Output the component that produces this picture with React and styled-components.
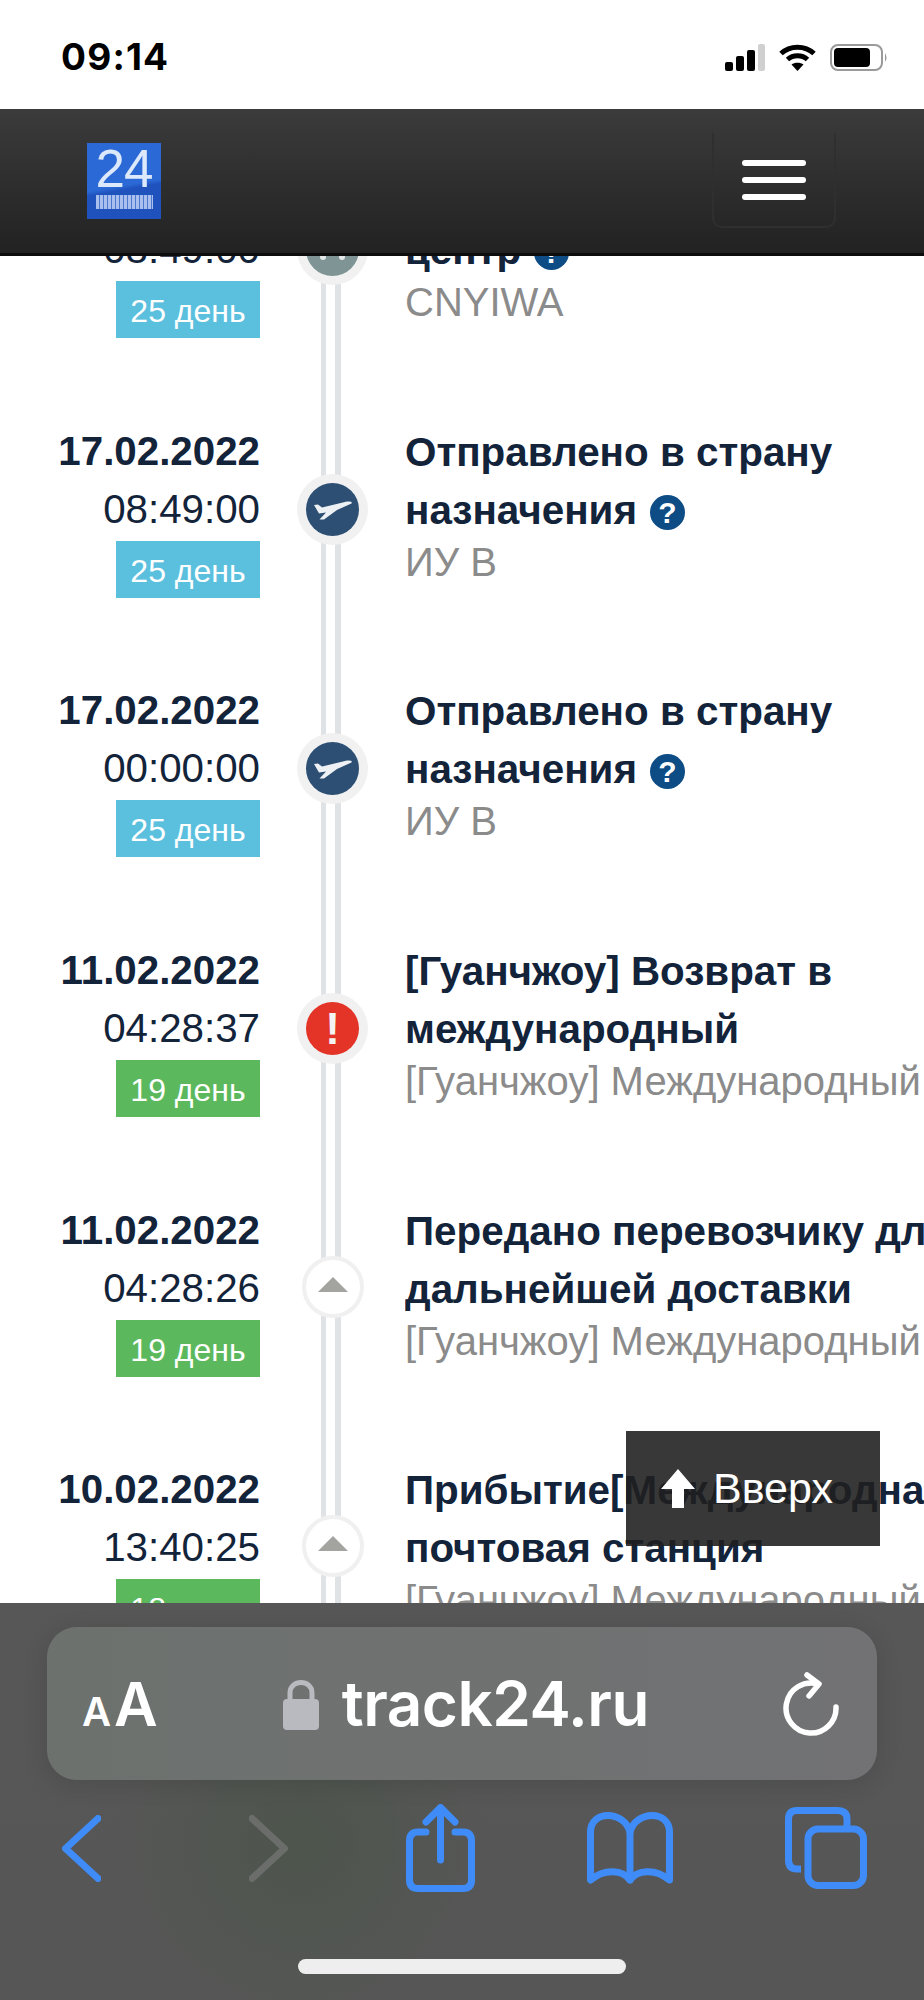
import React from 'react'
import styled, { createGlobalStyle } from 'styled-components'

const GlobalStyle = createGlobalStyle`
    html, body {
        margin: 0;
        padding: 0;
        background: #fff;
    }
`

const Phone = styled.div`
    position: relative;
    display: flex;
    flex-direction: column;
    width: 924px;
    height: 2000px;
    overflow: hidden;
    background: #fff;
    font-family: "Liberation Sans", Arial, sans-serif;
`

const StatusBar = styled.div`
    display: flex;
    flex: none;
    align-items: center;
    justify-content: space-between;
    height: 109px;
    padding: 0 36px 0 61px;
    box-sizing: border-box;
`

const Clock = styled.span`
    font-family: "Inter", sans-serif;
    font-weight: 700;
    font-size: 37px;
    letter-spacing: 1.2px;
    color: #000;
    margin-top: 4px;
`

const StatusIcons = styled.div`
    display: flex;
    align-items: center;
    gap: 14px;
    margin-top: 5px;
`

const NavBar = styled.div`
    position: relative;
    z-index: 2;
    display: flex;
    flex: none;
    align-items: center;
    justify-content: space-between;
    height: 147px;
    padding: 0 88px 0 87px;
    box-sizing: border-box;
    background: linear-gradient(#3b3b3b, #222);
    border-bottom: 3px solid #0c0c0c;
`

const Logo = styled.div`
    display: flex;
    flex-direction: column;
    align-items: center;
    width: 74px;
    height: 76px;
    background: linear-gradient(170deg, #2b69d6 0 55%, #1f52bd 60%);
`

const LogoDigits = styled.span`
    font-size: 53px;
    line-height: 52px;
    font-weight: 400;
    color: #dce8fb;
    letter-spacing: -1px;
`

const LogoBars = styled.div`
    width: 57px;
    height: 14px;
    background: repeating-linear-gradient(to right, #a9c0ee 0 3px, #4d76cf 3px 4px);
`

const MenuButton = styled.div`
    display: flex;
    flex-direction: column;
    align-items: center;
    justify-content: center;
    gap: 11px;
    width: 124px;
    height: 96px;
    box-sizing: border-box;
    border: 2px solid #2f2f2f;
    border-top-color: transparent;
    border-radius: 0 0 10px 10px;
    margin-top: -3px;
`

const MenuLine = styled.span`
    display: block;
    width: 64px;
    height: 6px;
    border-radius: 3px;
    background: #fff;
`

const Timeline = styled.div`
    flex: 1;
    min-height: 0;
    margin-top: -93px;
    overflow: hidden;
`

const Row = styled.div`
    display: grid;
    grid-template-columns: 260px 145px 1fr;
    height: 259.7px;
`

const DateCol = styled.div`
    display: flex;
    flex-direction: column;
    align-items: flex-end;
`

const DateText = styled.div`
    font-size: 40.3px;
    line-height: 58px;
    font-weight: 700;
    color: #12233a;
`

const TimeText = styled.div`
    font-size: 40.3px;
    line-height: 58px;
    color: #12233a;
`

const Badge = styled.div`
    width: 144px;
    height: 57px;
    margin-top: 2px;
    text-align: center;
    font-size: 32px;
    line-height: 60px;
    color: #fff;
    background: ${props => props.$color};
`

const Rail = styled.div`
    display: flex;
    justify-content: center;
    align-items: flex-start;
    background-image: linear-gradient(
        to right,
        transparent 61px,
        #e0e3e6 61px 66px,
        transparent 66px 75px,
        #e0e3e6 75px 81px,
        transparent 81px
    );
`

const Halo = styled.div`
    display: flex;
    align-items: center;
    justify-content: center;
    width: 71px;
    height: 71px;
    margin-top: 51px;
    border-radius: 50%;
    background: #f1f1f1;
`

const Dot = styled.div`
    display: flex;
    align-items: center;
    justify-content: center;
    width: 53px;
    height: 53px;
    border-radius: 50%;
    background: ${props => props.$color};
`

const ExclamationMark = styled.span`
    font-size: 44px;
    line-height: 53px;
    font-weight: 700;
    color: #f3f3f3;
`

const SmallMarker = styled.div`
    display: flex;
    align-items: center;
    justify-content: center;
    width: 62px;
    height: 62px;
    margin-top: 54px;
    box-sizing: border-box;
    border: 4px solid #f0f0f0;
    border-radius: 50%;
    background: #fff;
`

const Triangle = styled.div`
    width: 0;
    height: 0;
    margin-top: -5px;
    border-left: 15px solid transparent;
    border-right: 15px solid transparent;
    border-bottom: 15px solid #a3a39f;
`

const Content = styled.div`
    min-width: 0;
    overflow: hidden;
    white-space: nowrap;
`

const Title = styled.div`
    font-size: 40.4px;
    line-height: 58px;
    font-weight: 700;
    color: #12233a;
`

const Help = styled.span`
    display: inline-block;
    width: 35px;
    height: 35px;
    margin-left: 13px;
    border-radius: 50%;
    vertical-align: 1px;
    text-align: center;
    font-size: 30px;
    line-height: 35px;
    font-weight: 700;
    color: #fff;
    background: #0e4c85;
`

const Sub = styled.div`
    font-size: 40px;
    line-height: 46px;
    color: #8b8b8b;
`

const UpButton = styled.div`
    position: absolute;
    z-index: 1;
    left: 626px;
    top: 1431px;
    display: flex;
    align-items: center;
    gap: 18px;
    width: 254px;
    height: 115px;
    padding-left: 35px;
    box-sizing: border-box;
    font-size: 43px;
    color: #fff;
    background: rgba(31, 31, 31, 0.89);
`

const BottomBar = styled.div`
    position: absolute;
    z-index: 3;
    left: 0;
    right: 0;
    bottom: 0;
    display: flex;
    flex-direction: column;
    height: 397px;
    padding: 24px 47px 0;
    box-sizing: border-box;
    background:
        radial-gradient(circle at 300px 240px, #4d554c 0, rgba(77, 85, 76, 0) 190px),
        linear-gradient(#575757, #565656);
`

const UrlBar = styled.div`
    display: flex;
    align-items: center;
    justify-content: space-between;
    height: 153px;
    padding: 0 37px 0 35px;
    box-sizing: border-box;
    border-radius: 30px;
    color: #fff;
    background: linear-gradient(to right, #6c716e, #727274);
    box-shadow: 0 4px 24px rgba(0, 0, 0, 0.12);
`

const TextSize = styled.div`
    display: flex;
    align-items: baseline;
    gap: 3px;
    font-family: "Inter", sans-serif;
    font-weight: 600;
`

const SmallA = styled.span`
    font-size: 40px;
`

const BigA = styled.span`
    font-size: 60px;
`

const Address = styled.div`
    display: flex;
    align-items: center;
    gap: 23px;
    margin-right: 8px;
`

const Domain = styled.span`
    font-family: "Inter", sans-serif;
    font-weight: 600;
    font-size: 62px;
    letter-spacing: -0.5px;
`

const ToolBar = styled.div`
    display: flex;
    align-items: center;
    height: 118px;
    margin: 9px 0 0 15px;
`

const ToolItem = styled.div`
    display: flex;
    margin-left: ${props => props.$gap}px;
`

const HomeIndicator = styled.div`
    align-self: center;
    width: 328px;
    height: 15px;
    margin-top: 52px;
    border-radius: 8px;
    background: #eeeeee;
`

const PlaneIcon = () => (
    <svg width="53" height="53" viewBox="0 0 53 53">
        <path d="M8 22 L12 21.5 L16 24.5 L41 18.5 Q47 18 45.5 20.5 L31 27 L18 36.5 L13.5 36.5 L20 29.5 L13 30.5 Z" fill="#eef1f4" />
    </svg>
)

const TruckIcon = () => (
    <svg width="53" height="53" viewBox="0 0 53 53">
        <rect x="10" y="18" width="33" height="14" rx="3" fill="#c4cdcd" />
        <circle cx="17" cy="34" r="3" fill="#e4e8e8" />
        <circle cx="36" cy="34" r="3" fill="#e4e8e8" />
    </svg>
)

const Signal = () => (
    <svg width="40" height="27" viewBox="0 0 40 27">
        <rect x="0" y="18" width="8" height="9" rx="2" fill="#000" />
        <rect x="11" y="12" width="8" height="15" rx="2" fill="#000" />
        <rect x="22" y="6" width="8" height="21" rx="2" fill="#000" />
        <rect x="33" y="0" width="7" height="27" rx="2" fill="#d0d0d0" />
    </svg>
)

const Wifi = () => (
    <svg width="37" height="27" viewBox="0 0 37 27" fill="none" stroke="#000" strokeWidth="5">
        <path d="M2 9.5 C11 1 26 1 35 9.5" />
        <path d="M8.5 15.5 C14 10.5 23 10.5 28.5 15.5" />
        <path d="M18.5 27 L12.5 20.5 C15.5 18 21.5 18 24.5 20.5 Z" fill="#000" stroke="none" />
    </svg>
)

const Battery = () => (
    <svg width="58" height="27" viewBox="0 0 58 27">
        <rect x="1" y="1" width="51" height="25" rx="7" fill="none" stroke="#9a9a9a" strokeWidth="2" />
        <rect x="4" y="4" width="36" height="19" rx="4" fill="#000" />
        <path d="M55 9 Q58 13.5 55 18 Z" fill="#9a9a9a" />
    </svg>
)

const UpArrow = () => (
    <svg width="34" height="39" viewBox="0 0 34 39">
        <path d="M17 0 L34 20 L23 20 L23 39 L11 39 L11 20 L0 20 Z" fill="#fff" />
    </svg>
)

const Lock = () => (
    <svg width="36" height="52" viewBox="0 0 36 52">
        <path d="M7 24 V15 C7 1 29 1 29 15 V24" fill="none" stroke="#b9b9c0" strokeWidth="5" />
        <rect x="0" y="21" width="36" height="31" rx="4" fill="#b9b9c0" />
    </svg>
)

const Reload = () => (
    <svg width="58" height="64" viewBox="0 0 58 64" fill="none" stroke="#fff" strokeWidth="5.5" strokeLinecap="round" strokeLinejoin="round">
        <path d="M36 12 A25 25 0 1 0 54 35" />
        <path d="M25 3 L37 12 L27 24" />
    </svg>
)

const BLUE = '#3f8cf8'

const Back = ({ color }) => (
    <svg width="39" height="67" viewBox="0 0 39 67" fill="none" stroke={color} strokeWidth="7" strokeLinecap="round" strokeLinejoin="round">
        <path d="M36 3.5 L3.5 33.5 L36 63.5" />
    </svg>
)

const Forward = ({ color }) => (
    <svg width="39" height="67" viewBox="0 0 39 67" fill="none" stroke={color} strokeWidth="7" strokeLinecap="round" strokeLinejoin="round">
        <path d="M3 3.5 L35.5 33.5 L3 63.5" />
    </svg>
)

const Share = () => (
    <svg width="69" height="88" viewBox="0 0 69 88" fill="none" stroke={BLUE} strokeWidth="7" strokeLinecap="round" strokeLinejoin="round">
        <path d="M20 28 H12 Q3.5 28 3.5 37 V76 Q3.5 84.5 12 84.5 H57 Q65.5 84.5 65.5 76 V37 Q65.5 28 57 28 H49" />
        <path d="M34.5 56 V4" />
        <path d="M20 18 L34.5 3.5 L49 18" />
    </svg>
)

const Book = () => (
    <svg width="86" height="72" viewBox="0 0 86 72" fill="none" stroke={BLUE} strokeWidth="7" strokeLinecap="round" strokeLinejoin="round">
        <path d="M43 68 C36 58 18 56 3.5 68 V20 C3.5 -2 37 -2 43 20 C49 -2 82.5 -2 82.5 20 V68 C68 56 50 58 43 68 Z" />
        <path d="M43 20 V68" />
    </svg>
)

const Tabs = () => (
    <svg width="82" height="82" viewBox="0 0 82 82" fill="none" stroke={BLUE} strokeWidth="7" strokeLinejoin="round">
        <path d="M16 62 H12 Q3.5 62 3.5 53 V12 Q3.5 3.5 12 3.5 H52 Q62 3.5 62 12 V20" />
        <rect x="23" y="22" width="55.5" height="56.5" rx="10" />
    </svg>
)

const events = [
    { date: '17.02.2022', time: '08:49:00', days: '25 день', lines: ['Прибыло в сортировочный', 'центр'], help: true, sub: 'CNYIWA', marker: 'truck', color: '#5bc0de' },
    { date: '17.02.2022', time: '08:49:00', days: '25 день', lines: ['Отправлено в страну', 'назначения'], help: true, sub: 'ИУ В', marker: 'plane', color: '#5bc0de' },
    { date: '17.02.2022', time: '00:00:00', days: '25 день', lines: ['Отправлено в страну', 'назначения'], help: true, sub: 'ИУ В', marker: 'plane', color: '#5bc0de' },
    { date: '11.02.2022', time: '04:28:37', days: '19 день', lines: ['[Гуанчжоу] Возврат в', 'международный'], sub: '[Гуанчжоу] Международный', marker: 'alert', color: '#5cb85c' },
    { date: '11.02.2022', time: '04:28:26', days: '19 день', lines: ['Передано перевозчику для', 'дальнейшей доставки'], sub: '[Гуанчжоу] Международный', marker: 'small', color: '#5cb85c' },
    { date: '10.02.2022', time: '13:40:25', days: '18 день', lines: ['Прибытие[Международная', 'почтовая станция'], sub: '[Гуанчжоу] Международный', marker: 'small', color: '#5cb85c' },
]

const Marker = ({ type }) => {
    if (type === 'small') {
        return <SmallMarker><Triangle /></SmallMarker>
    }
    return (
        <Halo>
            {type === 'plane' && <Dot $color="#2c4f73"><PlaneIcon /></Dot>}
            {type === 'truck' && <Dot $color="#7f9595"><TruckIcon /></Dot>}
            {type === 'alert' && <Dot $color="#e33427"><ExclamationMark>!</ExclamationMark></Dot>}
        </Halo>
    )
}

const App = () => {
    return (
        <Phone>
            <GlobalStyle />
            <StatusBar>
                <Clock>09:14</Clock>
                <StatusIcons>
                    <Signal />
                    <Wifi />
                    <Battery />
                </StatusIcons>
            </StatusBar>
            <NavBar>
                <Logo>
                    <LogoDigits>24</LogoDigits>
                    <LogoBars />
                </Logo>
                <MenuButton>
                    <MenuLine />
                    <MenuLine />
                    <MenuLine />
                </MenuButton>
            </NavBar>
            <Timeline>
                {events.map((event, i) => (
                    <Row key={i}>
                        <DateCol>
                            <DateText>{event.date}</DateText>
                            <TimeText>{event.time}</TimeText>
                            <Badge $color={event.color}>{event.days}</Badge>
                        </DateCol>
                        <Rail>
                            <Marker type={event.marker} />
                        </Rail>
                        <Content>
                            <Title>{event.lines[0]}</Title>
                            <Title>{event.lines[1]}{event.help && <Help>?</Help>}</Title>
                            <Sub>{event.sub}</Sub>
                        </Content>
                    </Row>
                ))}
            </Timeline>
            <UpButton>
                <UpArrow />
                <span>Вверх</span>
            </UpButton>
            <BottomBar>
                <UrlBar>
                    <TextSize>
                        <SmallA>A</SmallA>
                        <BigA>A</BigA>
                    </TextSize>
                    <Address>
                        <Lock />
                        <Domain>track24.ru</Domain>
                    </Address>
                    <Reload />
                </UrlBar>
                <ToolBar>
                    <Back color={BLUE} />
                    <ToolItem $gap={148}><Forward color="#6b6d6b" /></ToolItem>
                    <ToolItem $gap={118}><Share /></ToolItem>
                    <ToolItem $gap={112}><Book /></ToolItem>
                    <ToolItem $gap={112}><Tabs /></ToolItem>
                </ToolBar>
                <HomeIndicator />
            </BottomBar>
        </Phone>
    )
}

export default App
